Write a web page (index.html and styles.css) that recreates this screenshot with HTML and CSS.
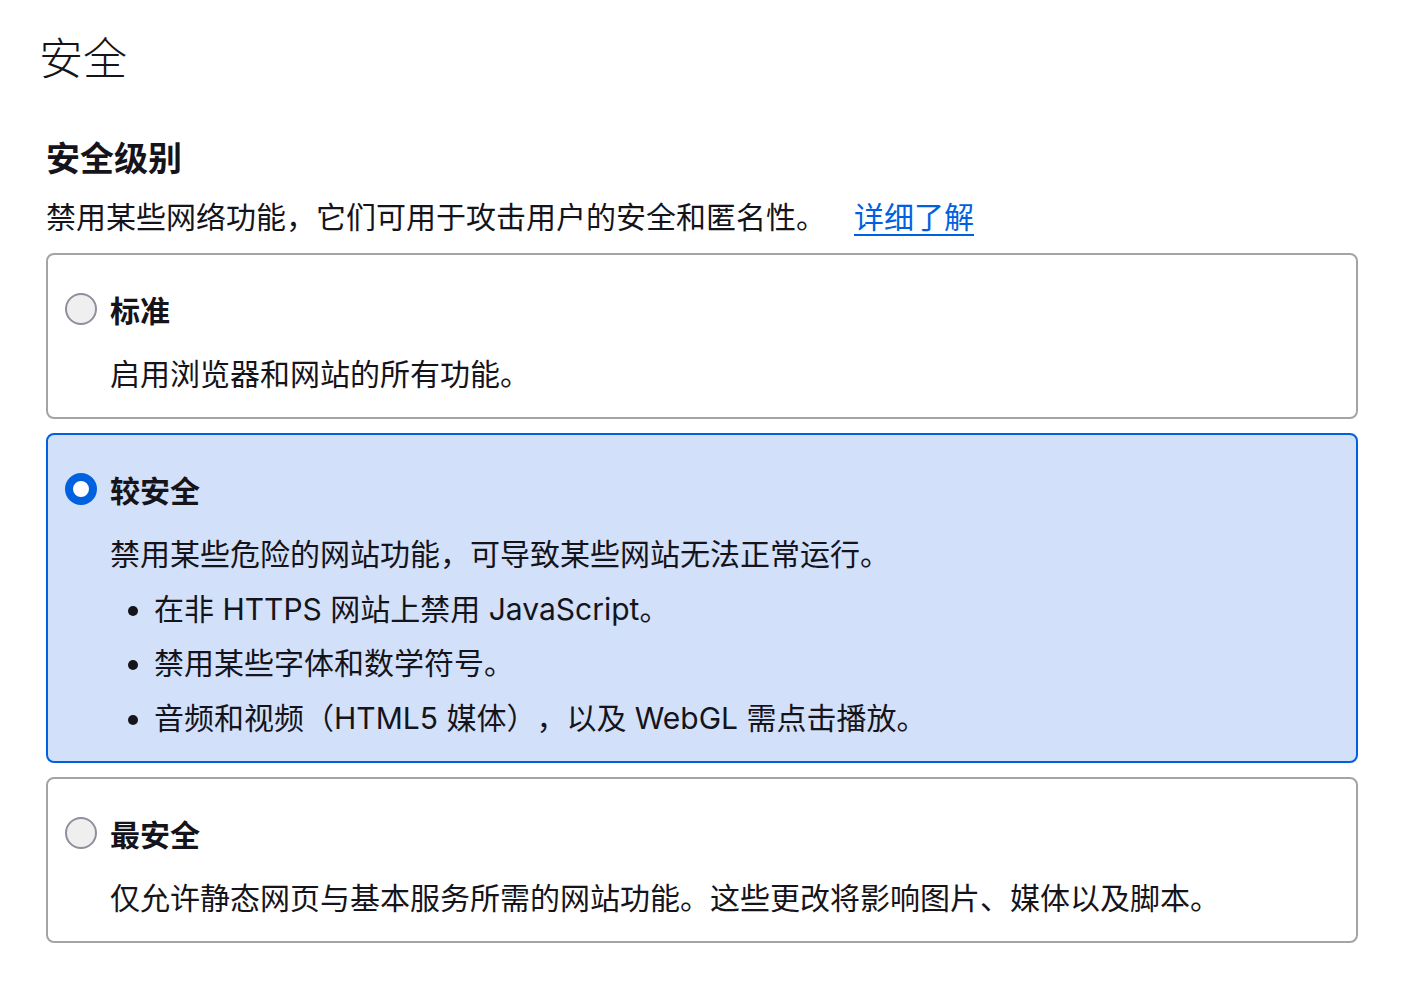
FILE: index.html
```html
<!DOCTYPE html>
<html lang="zh-CN">
<head>
<meta charset="utf-8">
<title>安全</title>
<link rel="stylesheet" href="styles.css">
</head>
<body>
<main class="page">
  <h1 class="title">安全</h1>
  <section class="security">
    <h2 class="section-title">安全级别</h2>
    <p class="section-desc">禁用某些网络功能，它们可用于攻击用户的安全和匿名性。<a class="learn-more" href="#">详细了解</a></p>

    <div class="card">
      <div class="card-head">
        <span class="radio"></span>
        <span class="card-label">标准</span>
      </div>
      <p class="card-desc">启用浏览器和网站的所有功能。</p>
    </div>

    <div class="card card-selected">
      <div class="card-head">
        <span class="radio radio-checked"></span>
        <span class="card-label">较安全</span>
      </div>
      <p class="card-desc">禁用某些危险的网站功能，可导致某些网站无法正常运行。</p>
      <ul class="card-list">
        <li>在非 HTTPS 网站上禁用 JavaScript。</li>
        <li>禁用某些字体和数学符号。</li>
        <li>音频和视频（HTML5 媒体），以及 WebGL 需点击播放。</li>
      </ul>
    </div>

    <div class="card">
      <div class="card-head">
        <span class="radio"></span>
        <span class="card-label">最安全</span>
      </div>
      <p class="card-desc">仅允许静态网页与基本服务所需的网站功能。这些更改将影响图片、媒体以及脚本。</p>
    </div>
  </section>
</main>
</body>
</html>
```

FILE: styles.css
```css
html, body {
  margin: 0;
  padding: 0;
  background: #ffffff;
}

body {
  font-family: "Inter", "Noto Sans CJK SC", sans-serif;
  color: #15141a;
  font-size: 30px;
  text-spacing-trim: space-all;
}

.page {
  padding: 26px 0 0 46px;
  width: 1312px;
}

.title {
  margin: 0 0 0 -7px;
  font-size: 44px;
  line-height: 60px;
  font-weight: 300;
  font-family: "Noto Sans CJK SC", sans-serif;
}

.section-title {
  margin: 47px 0 0 0;
  font-size: 34px;
  line-height: 48px;
  font-weight: 700;
  font-family: "Noto Sans CJK SC", sans-serif;
}

.section-desc {
  margin: 11px 0 0 0;
  line-height: 46px;
  font-family: "Noto Sans CJK SC", sans-serif;
}

.learn-more {
  margin-left: 28px;
  color: #0061e0;
  text-decoration: underline;
  text-decoration-thickness: 2px;
  text-underline-offset: 6px;
}

.card {
  margin-top: 15px;
  border: 2px solid #a4a4a8;
  border-radius: 8px;
  padding: 30px 17px 20px 17px;
  background: #ffffff;
}

.card + .card {
  margin-top: 14px;
}

.card-selected {
  border-color: #0061e0;
  background: #d2e0f9;
}

.card-head {
  display: flex;
  align-items: center;
  gap: 13px;
  height: 48px;
}

.radio {
  box-sizing: border-box;
  width: 32px;
  height: 32px;
  border-radius: 50%;
  border: 2px solid #8f8f9d;
  background: #efeff0;
  flex: none;
}

.radio-checked {
  border: 8px solid #0061e0;
  background: #ffffff;
}

.card-label {
  font-weight: 700;
  line-height: 48px;
  font-family: "Noto Sans CJK SC", sans-serif;
}

.card-desc {
  margin: 18px 0 0 45px;
  line-height: 46px;
}

.card-list {
  margin: 0 0 0 45px;
  padding: 0 0 0 44px;
  list-style: disc;
}

.card-list li {
  margin-top: 8.5px;
  line-height: 46px;
}
```
